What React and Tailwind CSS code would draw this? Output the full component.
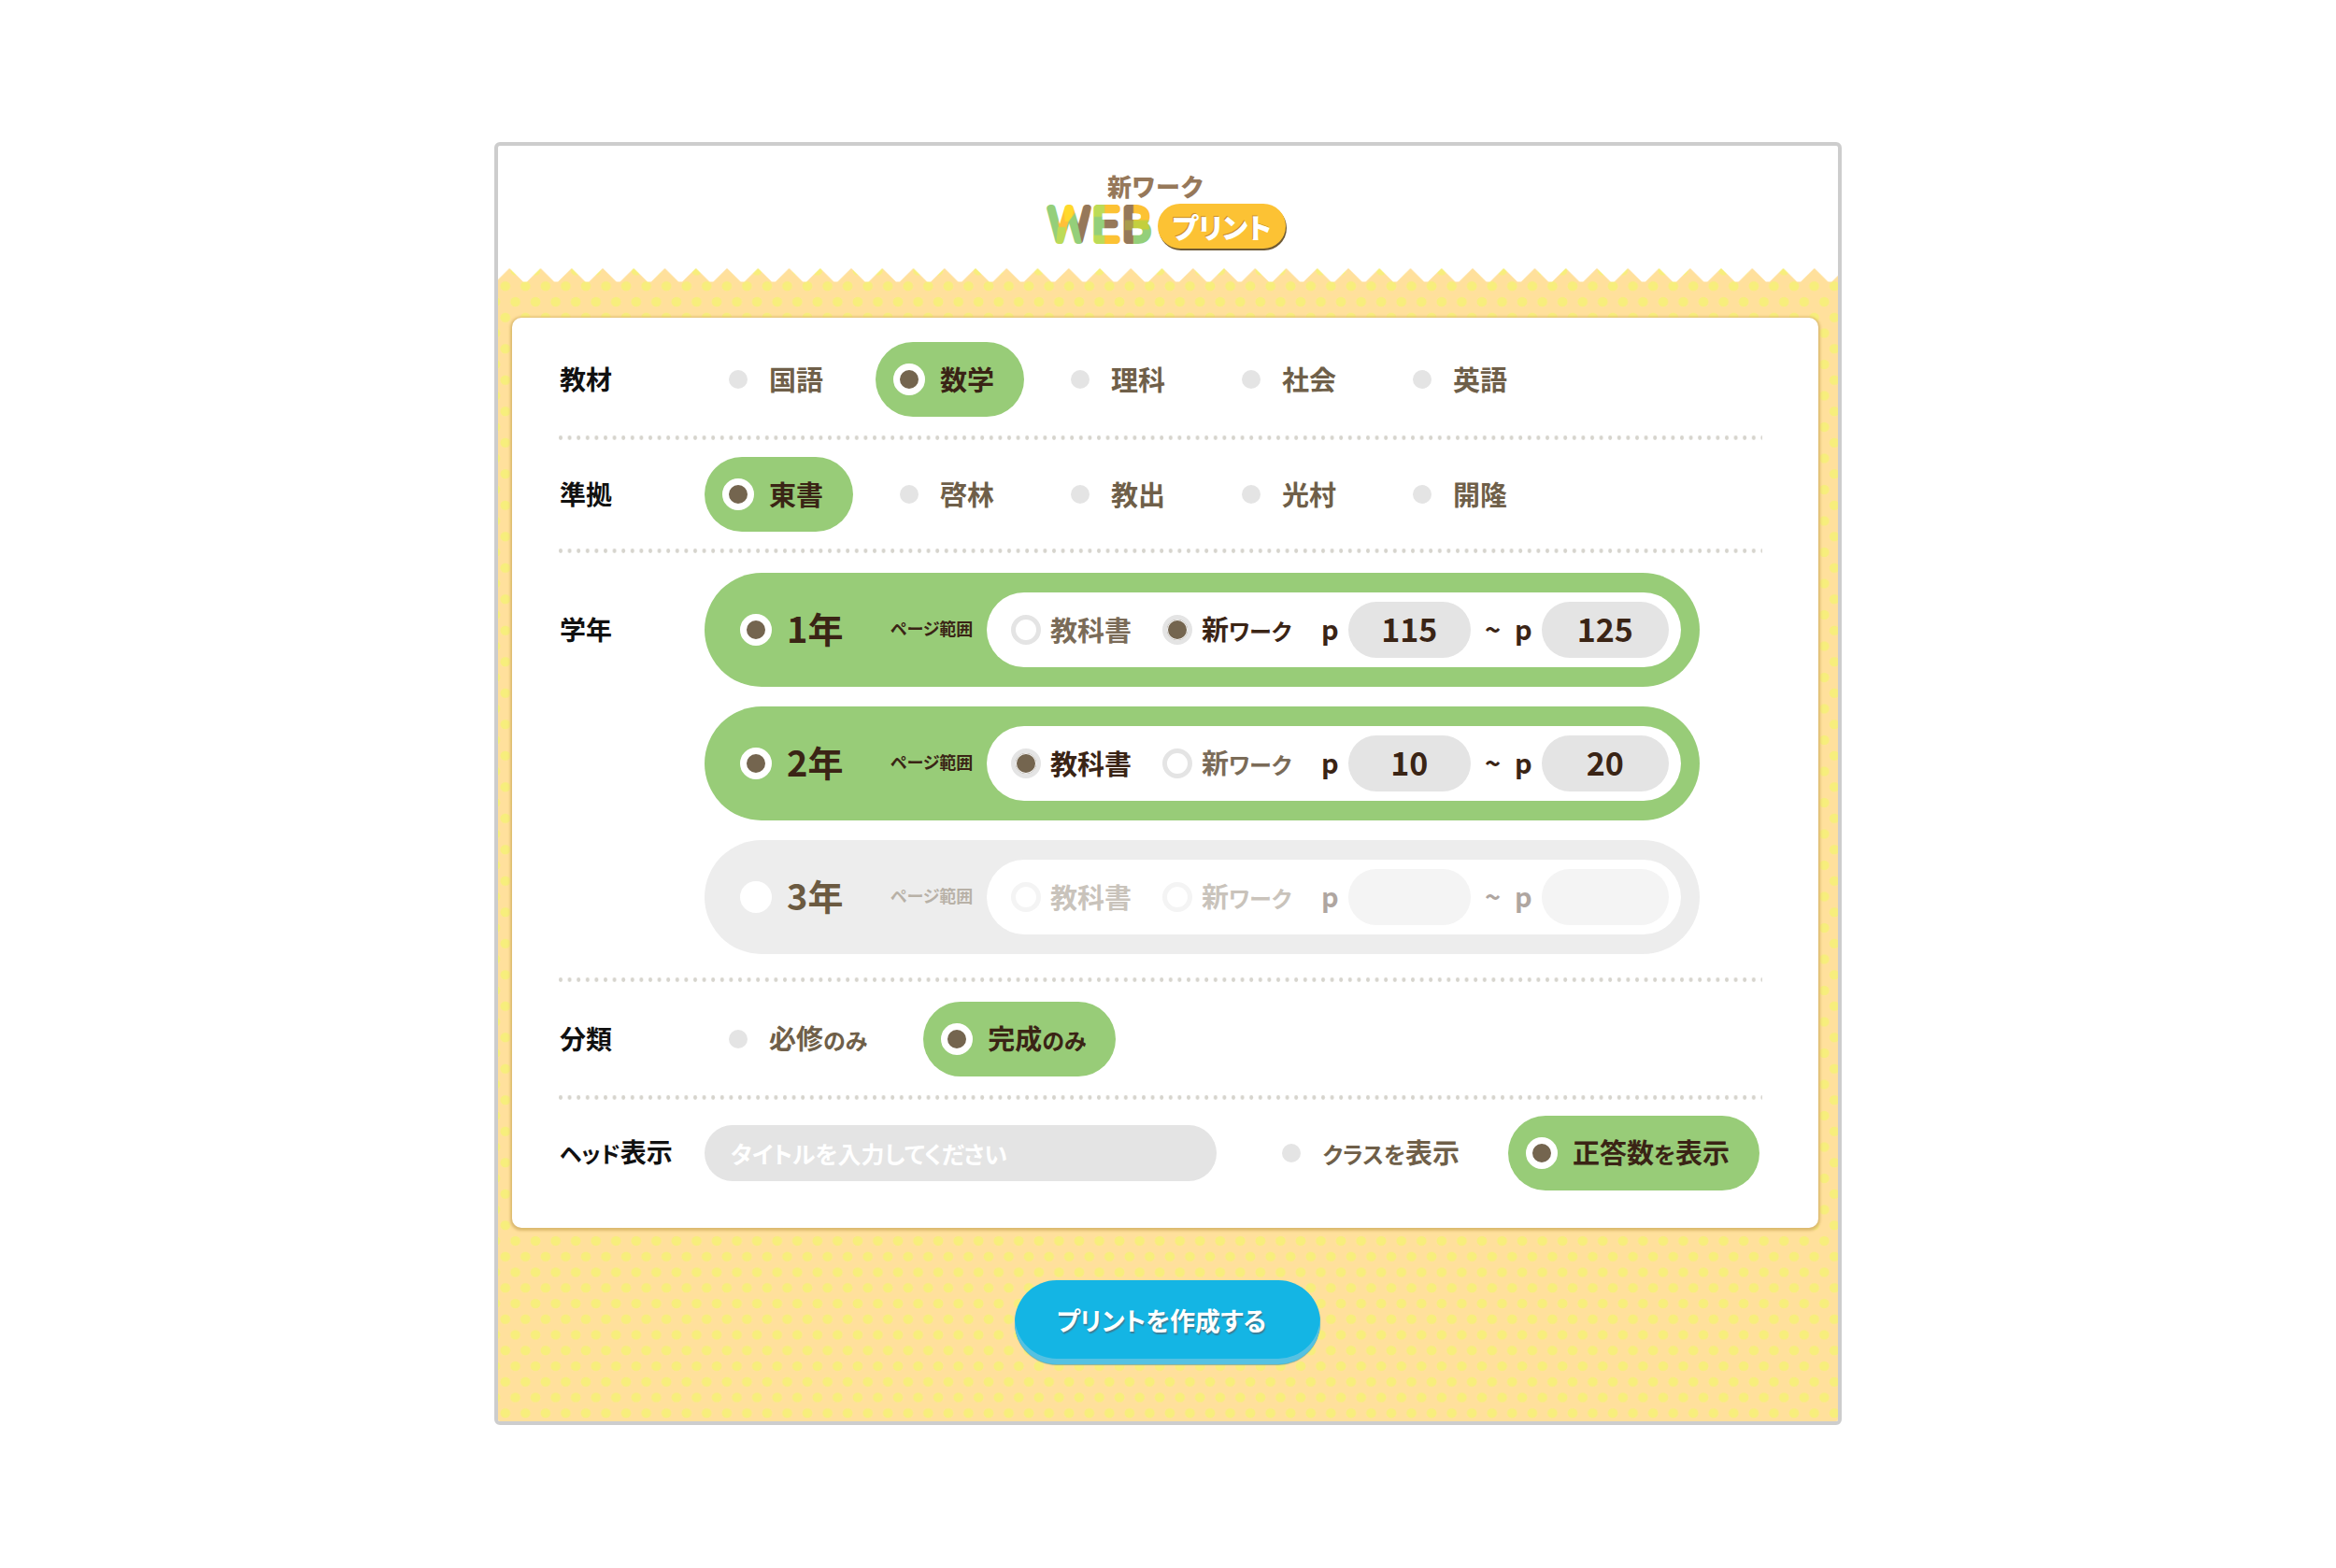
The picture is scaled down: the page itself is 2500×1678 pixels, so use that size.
import React from "react";

const OPTION_RADIO =
  "size-[34px] shrink-0 appearance-none rounded-full border-[7px] border-transparent bg-[#e4e4e4] bg-clip-padding checked:border-white checked:bg-[#74654f] checked:bg-clip-border";

// Sets kana a step smaller than the kanji around them.
function Mixed({ children }) {
  const parts = children.split(/([\u3040-\u30ff]+)/).filter(Boolean);
  return (
    <span className="pb-[2px]">
      {parts.map((part, i) =>
        /[\u3040-\u30ff]/.test(part) ? (
          <span key={i} className="text-[24px]">
            {part}
          </span>
        ) : (
          part
        )
      )}
    </span>
  );
}

function Option({ name, label, checked }) {
  return (
    <label
      className={
        "flex h-20 items-center gap-4 rounded-full pl-[19px] pr-8 text-[29px] leading-10 whitespace-nowrap " +
        (checked ? "bg-[#98cc78] text-[#3a2415]" : "text-[#6f5f49]")
      }
    >
      <input type="radio" name={name} defaultChecked={checked} className={OPTION_RADIO} />
      <Mixed>{label}</Mixed>
    </label>
  );
}

function Row({ title, className, tall, children }) {
  return (
    <div role="group" aria-label={title} className={"flex items-start " + className}>
      <div
        className={
          "flex w-[156px] shrink-0 items-center pl-[1px] text-[28px] leading-10 whitespace-nowrap text-[#111] " +
          (tall ? "h-[122px]" : "h-20")
        }
      >
        <Mixed>{title}</Mixed>
      </div>
      {children}
    </div>
  );
}

function Divider() {
  return (
    <svg className="block h-[5px] w-full" aria-hidden="true">
      <rect width="100%" height="5" fill="url(#dotted-rule)" />
    </svg>
  );
}

function SourceRadio({ name, label, checked, disabled }) {
  return (
    <label
      className={
        "flex items-center gap-[10px] whitespace-nowrap " +
        (checked ? "text-[#3a2415]" : "text-[#7a6b58]")
      }
    >
      <input
        type="radio"
        name={name}
        defaultChecked={checked}
        disabled={disabled}
        className="size-8 shrink-0 appearance-none rounded-full border-[5px] border-[#e4e4e4] bg-white checked:bg-[#74654f] checked:shadow-[inset_0_0_0_1px_#f4f4f4]"
      />
      <Mixed>{label}</Mixed>
    </label>
  );
}

function PageField({ label, value, disabled, className }) {
  return (
    <label className={"flex items-center gap-[10px] " + className}>
      <span className="pb-1">p</span>
      <input
        type="text"
        defaultValue={value}
        disabled={disabled}
        aria-label={label}
        className="h-[60px] w-full min-w-0 rounded-full bg-[#e4e4e4] pb-1 text-center text-[34px] leading-10"
      />
    </label>
  );
}

function GradeRow({ grade, source, from, to, disabled }) {
  const name = "source-" + grade;
  return (
    <div
      className={
        "flex h-[122px] items-center rounded-full pr-5 pl-[38px] " +
        (disabled ? "bg-[#ededed] text-[#6b5a41]" : "bg-[#98cc78] text-[#3a2415]")
      }
    >
      <label className="flex w-[161px] shrink-0 items-center gap-4 text-[38px] leading-10 whitespace-nowrap">
        <input
          type="checkbox"
          defaultChecked={!disabled}
          className="size-[34px] shrink-0 appearance-none rounded-full border-[7px] border-white bg-white checked:bg-[#74654f]"
        />
        <span className="pb-1">{grade}年</span>
      </label>
      <span className={"w-[103px] shrink-0 pb-1 text-[18px] leading-10 whitespace-nowrap " + (disabled ? "opacity-40" : "")}>
        ページ範囲
      </span>
      <div className="flex h-20 flex-1 items-center rounded-full bg-white pr-[13px] pl-[26px] text-[29px] leading-10 text-[#3a2415]">
        <div className={"flex flex-1 items-center " + (disabled ? "opacity-40" : "")}>
          <div className="flex w-[332px] shrink-0 items-center gap-[33px]">
            <SourceRadio name={name} label="教科書" checked={source === "textbook"} disabled={disabled} />
            <SourceRadio name={name} label="新ワーク" checked={source === "work"} disabled={disabled} />
          </div>
          <PageField label="開始ページ" value={from} disabled={disabled} className="w-[160px]" />
          <span className="w-[47px] pb-1 text-center">~</span>
          <PageField label="終了ページ" value={to} disabled={disabled} className="min-w-0 flex-1" />
        </div>
      </div>
    </div>
  );
}

function Logo() {
  return (
    <h1 className="flex flex-col items-center pr-1">
      <span className="pr-[22px] text-[26px] leading-[38px] font-black text-[#96785a] [font-feature-settings:normal]">
        新ワーク
      </span>
      <span className="flex items-start gap-1">
        <svg viewBox="87 175 345 150" className="h-[50px] w-[115px] overflow-visible" role="img" aria-label="WEB">
          <defs>
            <pattern id="logo-ink" patternUnits="userSpaceOnUse" x="0" y="0" width="500" height="400">
              <rect width="500" height="400" fill="#fcc234" />
              <polygon points="70,160 122,160 160,320 105,320" fill="#94cf7a" />
              <polygon points="170,160 146,160 124,235 140,320 152,300" fill="#ffc03a" />
              <polygon points="140,160 182,160 166,232 146,232" fill="#ffd92b" />
              <polygon points="123,250 148,250 150,320 116,320" fill="#bcdb57" />
              <polygon points="158,232 182,200 204,320 162,320 152,250" fill="#94cf7a" />
              <polygon points="196,160 235,160 206,310 200,300 186,235" fill="#96785a" />
              <rect x="236" y="160" width="37" height="160" fill="#94cf7a" />
              <rect x="236" y="160" width="37" height="57" fill="#bcdb57" />
              <rect x="236" y="276" width="37" height="50" fill="#bcdb57" />
              <rect x="273" y="222" width="50" height="42" fill="#96785a" />
              <rect x="330" y="160" width="36" height="160" fill="#96785a" />
              <rect x="366" y="230" width="70" height="90" fill="#94cf7a" />
              <rect x="338" y="228" width="28" height="32" fill="#a99c4c" />
              <rect x="366" y="228" width="50" height="30" fill="#c3cf3e" />
            </pattern>
          </defs>
          <g
            fill="url(#logo-ink)"
            stroke="url(#logo-ink)"
            strokeWidth="24"
            strokeLinejoin="round"
            fontFamily="Roboto"
            fontWeight="100"
            fontSize="142"
          >
            <text x="95" y="293">W</text>
            <text x="236" y="293">E</text>
            <text x="333" y="293">B</text>
          </g>
        </svg>
        <span className="flex h-12 w-[137px] items-center justify-center rounded-full bg-[#fcc234] text-[30px] font-black text-white shadow-[1px_2px_0_#6e5a35] [text-shadow:-1px_-1px_0_#c98f2a]">
          プリント
        </span>
      </span>
    </h1>
  );
}

function Backdrop() {
  return (
    <svg className="absolute inset-0 h-full w-full" aria-hidden="true">
      <defs>
        <pattern id="dots" patternUnits="userSpaceOnUse" x="-3" y="2.5" width="21.55" height="33.5">
          <ellipse cx="10.8" cy="16.8" rx="5.4" ry="5.2" fill="#f7ee7c" />
          <ellipse cx="0" cy="0" rx="5.4" ry="5.2" fill="#f7ee7c" />
          <ellipse cx="21.55" cy="0" rx="5.4" ry="5.2" fill="#f7ee7c" />
          <ellipse cx="0" cy="33.5" rx="5.4" ry="5.2" fill="#f7ee7c" />
          <ellipse cx="21.55" cy="33.5" rx="5.4" ry="5.2" fill="#f7ee7c" />
        </pattern>
        <pattern id="zigzag" patternUnits="userSpaceOnUse" x="12.3" y="0" width="33.25" height="400">
          <polygon points="0,0 33.25,0 18.6,14.5 14.6,14.5" fill="#fff" />
        </pattern>
        <pattern id="dotted-rule" patternUnits="userSpaceOnUse" x="0" y="0" width="9.6" height="5">
          <ellipse cx="2" cy="2.5" rx="2" ry="2.4" fill="#d6d4cd" />
        </pattern>
      </defs>
      <rect width="100%" height="100%" fill="#ffe09c" />
      <rect width="100%" height="100%" fill="url(#dots)" />
      <rect width="100%" height="16" fill="url(#zigzag)" />
    </svg>
  );
}

const SUBJECTS = ["国語", "数学", "理科", "社会", "英語"];
const PUBLISHERS = ["東書", "啓林", "教出", "光村", "開隆"];

export default function App() {
  return (
    <div className="min-h-screen bg-white px-8 py-[152px] font-['Noto_Sans_CJK_JP',sans-serif] font-bold [font-feature-settings:'palt']">
      <main className="mx-auto max-w-[1442px] overflow-hidden rounded-md border-4 border-[#cdcdcd] bg-white">
        <header className="flex h-[131px] justify-center pt-6">
          <Logo />
        </header>
        <form className="relative pt-[53px] pr-[21px] pb-[61px] pl-[15px]" onSubmit={(e) => e.preventDefault()}>
          <Backdrop />
          <div className="relative rounded-[10px] bg-white pt-[26px] pr-[60px] pb-10 pl-[50px] shadow-[0_1px_3px_2px_#dcb96f]">
            <Row title="教材" className="mb-5">
              <div className="flex gap-6">
                {SUBJECTS.map((s) => (
                  <Option key={s} name="subject" label={s} checked={s === "数学"} />
                ))}
              </div>
            </Row>
            <Divider />
            <Row title="準拠" className="my-[18px]">
              <div className="flex gap-6">
                {PUBLISHERS.map((s) => (
                  <Option key={s} name="publisher" label={s} checked={s === "東書"} />
                ))}
              </div>
            </Row>
            <Divider />
            <Row title="学年" tall className="mt-[21px] mb-[25px]">
              <div className="flex max-w-[1065px] flex-1 flex-col gap-[21px]">
                <GradeRow grade="1" source="work" from="115" to="125" />
                <GradeRow grade="2" source="textbook" from="10" to="20" />
                <GradeRow grade="3" disabled />
              </div>
            </Row>
            <Divider />
            <Row title="分類" className="mt-[21px] mb-5">
              <div className="flex gap-7">
                <Option name="category" label="必修のみ" />
                <Option name="category" label="完成のみ" checked />
              </div>
            </Row>
            <Divider />
            <Row title="ヘッド表示" className="mt-[17px] pr-[3px]">
              <div className="flex min-w-0 flex-1 items-center gap-11">
                <input
                  type="text"
                  aria-label="タイトル"
                  placeholder="タイトルを入力してください"
                  className="h-[60px] min-w-0 flex-1 rounded-full bg-[#e4e4e4] px-7 text-[25px] placeholder:text-white placeholder:opacity-100"
                />
                <div className="flex gap-5">
                  <Option name="head" label="クラスを表示" />
                  <Option name="head" label="正答数を表示" checked />
                </div>
              </div>
            </Row>
          </div>
          <div className="relative mt-14 flex justify-center pl-1">
            <button
              type="submit"
              className="h-[90px] w-[327px] rounded-full bg-[#14b5e4] pr-3 pb-1 text-[27px] text-white shadow-[inset_0_-6px_0_#55c1e2,0_1px_1px_#8fae94] [text-shadow:1px_2px_1px_#3c7f99]"
            >
              プリントを作成する
            </button>
          </div>
        </form>
      </main>
    </div>
  );
}
